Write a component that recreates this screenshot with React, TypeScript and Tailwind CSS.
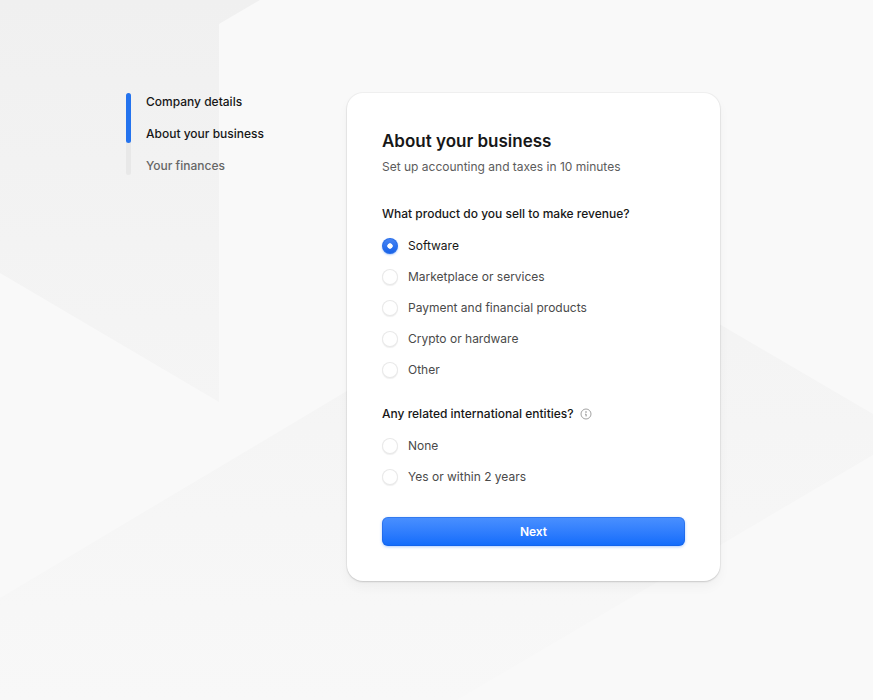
import { useState } from "react"
import clsx from "clsx"

const steps = [
  { label: "Company details", done: true },
  { label: "About your business", done: true },
  { label: "Your finances", done: false },
]

const products = [
  "Software",
  "Marketplace or services",
  "Payment and financial products",
  "Crypto or hardware",
  "Other",
]

const entities = ["None", "Yes or within 2 years"]

function Backdrop() {
  return (
    <svg
      className="absolute inset-0 -z-10 h-full w-full"
      viewBox="0 0 873 700"
      preserveAspectRatio="xMidYMid slice"
      aria-hidden="true"
    >
      <defs>
        <linearGradient id="facet-top" x1="0" y1="0" x2="0" y2="1">
          <stop offset="0" stopColor="#f0f0f0" />
          <stop offset="1" stopColor="#f5f5f5" />
        </linearGradient>
        <linearGradient id="facet-bottom" x1="0" y1="0" x2="0" y2="1">
          <stop offset="0" stopColor="#f3f3f3" />
          <stop offset="1" stopColor="#f8f8f8" />
        </linearGradient>
      </defs>
      <path d="M0 0H260L219 24V402L0 273Z" fill="url(#facet-top)" />
      <path d="M0 598L588 247L873 414V455L457 700H0Z" fill="url(#facet-bottom)" />
    </svg>
  )
}

function InfoIcon() {
  return (
    <svg className="size-3" viewBox="0 0 12 12" fill="none" aria-hidden="true">
      <circle cx="6" cy="6" r="5" stroke="#a3a3a3" strokeWidth="1" />
      <circle cx="6" cy="4" r="0.8" fill="#8a8a8a" />
      <path d="M5.2 6.2H6.1V8.4" stroke="#8a8a8a" strokeWidth="1" />
    </svg>
  )
}

interface RadioListProps {
  name: string
  options: string[]
  value: string
  onChange: (value: string) => void
}

function RadioList({ name, options, value, onChange }: RadioListProps) {
  return (
    <div className="mt-3 flex flex-col gap-[11px]">
      {options.map((option) => (
        <label
          key={option}
          className={clsx(
            "flex items-center gap-[10px]",
            value === option ? "text-[#171717]" : "text-[#4a4a4a]"
          )}
        >
          <input
            type="radio"
            name={name}
            value={option}
            checked={value === option}
            onChange={() => onChange(option)}
            className="size-4 shrink-0 appearance-none rounded-full bg-white shadow-[0_0_0_1px_rgba(0,0,0,0.09)_inset,0_1px_1px_rgba(0,0,0,0.07)] checked:bg-[radial-gradient(circle,white_0_2.4px,transparent_3px),linear-gradient(#4a86f5,#1460e8)] checked:shadow-[0_0_0_1px_#2a6fe8_inset,0_1px_2px_rgba(30,110,250,0.35)]"
          />
          {option}
        </label>
      ))}
    </div>
  )
}

export default function App() {
  const [product, setProduct] = useState("Software")
  const [entity, setEntity] = useState("")

  return (
    <div className="relative isolate min-h-screen bg-[#f9f9f9] px-4 py-[93px] font-['Inter',sans-serif] text-xs leading-5 text-[#171717]">
      <Backdrop />

      <main className="mx-auto grid max-w-[621px] items-start gap-y-8 sm:grid-cols-[221px_minmax(0,373px)]">
        {/* Steps */}
        <nav aria-label="Steps" className="flex gap-[15px]">
          <div className="w-[5px] rounded-full bg-[#e8e8e8]">
            <div className="h-[61%] rounded-full bg-[#2473ee]" />
          </div>
          <ol className="flex flex-col gap-[14px] font-medium leading-[18px]">
            {steps.map((step) => (
              <li key={step.label}>
                <a href="#" className={step.done ? "text-[#171717]" : "text-[#666666]"}>
                  {step.label}
                </a>
              </li>
            ))}
          </ol>
        </nav>

        {/* Form card */}
        <form
          onSubmit={(e) => e.preventDefault()}
          className="rounded-2xl bg-white px-[35px] pt-9 pb-[35px] shadow-[0_0_0_1px_rgba(0,0,0,0.03),0_1px_2px_rgba(0,0,0,0.14),0_6px_12px_rgba(0,0,0,0.04)]"
        >
          <h1 className="text-[17px] leading-6 font-semibold">About your business</h1>
          <p className="mt-1 text-[#5c5c5c]">Set up accounting and taxes in 10 minutes</p>

          <fieldset className="mt-[27px]">
            <legend className="font-medium">What product do you sell to make revenue?</legend>
            <RadioList name="product" options={products} value={product} onChange={setProduct} />
          </fieldset>

          <fieldset className="mt-6">
            <legend className="flex items-center gap-[6px] font-medium">
              Any related international entities?
              <button type="button" aria-label="About international entities">
                <InfoIcon />
              </button>
            </legend>
            <RadioList name="entity" options={entities} value={entity} onChange={setEntity} />
          </fieldset>

          <button
            type="submit"
            className="mt-[30px] h-[29px] w-full rounded-md bg-linear-to-b from-[#4a90ff] to-[#0f6bfb] font-semibold text-white shadow-[0_0_0_1px_rgba(20,90,215,0.4)_inset,0_1px_3px_rgba(20,110,250,0.35)]"
          >
            Next
          </button>
        </form>
      </main>
    </div>
  )
}
